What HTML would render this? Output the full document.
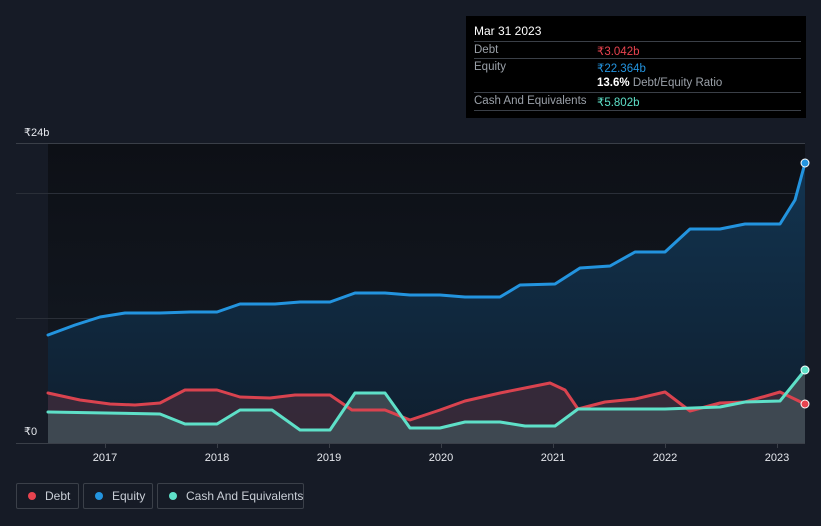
<!DOCTYPE html>
<html><head><meta charset="utf-8"><style>
body{margin:0;width:821px;height:526px;background:#161b26;font-family:"Liberation Sans",sans-serif;overflow:hidden;position:relative}
.tt{position:absolute;left:466px;top:16px;width:340px;height:102px;background:#000;color:#fff;font-size:11.5px}
.tt .r{position:absolute;left:8px;width:327px;border-top:1px solid #3a3f47}
.lbl{color:#9aa0a8;position:absolute;left:8px}
.val{position:absolute;left:131px;white-space:nowrap}
.leg{position:absolute;top:483px;height:26px;border:1px solid #3b4049;border-radius:2px;color:#c9ced6;font-size:12px;line-height:24px;box-sizing:border-box;white-space:nowrap}
.leg i{display:inline-block;width:8px;height:8px;border-radius:50%;margin:0 9px 0 11px;vertical-align:0px}
</style></head><body>
<svg width="821" height="526" style="position:absolute;left:0;top:0">
<defs>
<linearGradient id="bg" x1="0" y1="0" x2="0" y2="1"><stop offset="0" stop-color="#0d1016"/><stop offset="1" stop-color="#141a24"/></linearGradient>
<linearGradient id="eq" x1="0" y1="0" x2="0" y2="1"><stop offset="0" stop-color="#123450"/><stop offset="1" stop-color="#0f1e2e"/></linearGradient>
</defs>
<rect x="48" y="143" width="757" height="300" fill="url(#bg)"/>
<line x1="16" y1="143.5" x2="805" y2="143.5" stroke="#3a3f48"/>
<line x1="16" y1="193.5" x2="805" y2="193.5" stroke="#2a2f38"/>
<line x1="16" y1="318.5" x2="805" y2="318.5" stroke="#2a2f38"/>
<polygon fill="url(#eq)" points="48,335 75,325 100,317 125,313 160,313 190,312 217,312 240,304 275,304 300,302 330,302 355,293 385,293 410,295 440,295 465,297 500,297 520,285 555,284 580,268 610,266 635,252 665,252 690,229 720,229 745,224 780,224 795,200 805,163 805,443 48,443"/>
<polygon fill="#3a2a3a" opacity="0.9" points="48,393 80,400 110,404 135,405 160,403 185,390 217,390 240,397 270,398 295,395 330,395 352,410 385,410 410,420 440,410 465,401 500,393 530,387 550,383 565,390 578,409 605,402 635,399 665,392 690,411 720,403 745,402 780,392 805,404 805,443 48,443"/>
<polygon fill="#3f4a52" opacity="0.95" points="48,412 160,414 185,424 217,424 240,410 272,410 300,430 330,430 355,393 385,393 410,428 440,428 465,422 500,422 525,426 555,426 578,409 665,409 720,407 745,402 780,401 805,370 805,443 48,443"/>
<g fill="none" stroke-width="3" stroke-linejoin="round" stroke-linecap="round">
<polyline stroke="#d9434f" points="48,393 80,400 110,404 135,405 160,403 185,390 217,390 240,397 270,398 295,395 330,395 352,410 385,410 410,420 440,410 465,401 500,393 530,387 550,383 565,390 578,409 605,402 635,399 665,392 690,411 720,403 745,402 780,392 805,404"/>
<polyline stroke="#5ee0c8" points="48,412 160,414 185,424 217,424 240,410 272,410 300,430 330,430 355,393 385,393 410,428 440,428 465,422 500,422 525,426 555,426 578,409 665,409 720,407 745,402 780,401 805,370"/>
<polyline stroke="#2394df" points="48,335 75,325 100,317 125,313 160,313 190,312 217,312 240,304 275,304 300,302 330,302 355,293 385,293 410,295 440,295 465,297 500,297 520,285 555,284 580,268 610,266 635,252 665,252 690,229 720,229 745,224 780,224 795,200 805,163"/>
</g>
<circle cx="805" cy="163" r="4" fill="#2394df" stroke="#fff" stroke-width="1"/>
<circle cx="805" cy="370" r="4" fill="#5ee0c8" stroke="#fff" stroke-width="1"/>
<circle cx="805" cy="404" r="4" fill="#e8434f" stroke="#fff" stroke-width="1"/>
<line x1="16" y1="443.5" x2="805" y2="443.5" stroke="#3a3f48"/>
<g stroke="#3a3f48"><line x1="105.5" y1="443" x2="105.5" y2="448"/><line x1="217.5" y1="443" x2="217.5" y2="448"/><line x1="329.5" y1="443" x2="329.5" y2="448"/><line x1="441.5" y1="443" x2="441.5" y2="448"/><line x1="553.5" y1="443" x2="553.5" y2="448"/><line x1="665.5" y1="443" x2="665.5" y2="448"/><line x1="777.5" y1="443" x2="777.5" y2="448"/></g>
<g fill="#e6e9ee" font-size="11" font-family="Liberation Sans, sans-serif" text-anchor="middle">
<text x="105" y="461">2017</text><text x="217" y="461">2018</text><text x="329" y="461">2019</text><text x="441" y="461">2020</text><text x="553" y="461">2021</text><text x="665" y="461">2022</text><text x="777" y="461">2023</text>
</g>
<g fill="#e6e9ee" font-size="11" font-family="Liberation Sans, DejaVu Sans, sans-serif">
<text x="24" y="136">₹24b</text><text x="24" y="435">₹0</text>
</g>
</svg>
<div class="tt">
<div style="position:absolute;left:8px;top:8px;font-size:12px">Mar 31 2023</div>
<div class="r" style="top:25px"></div>
<div class="lbl" style="top:28px">Debt</div><div class="val" style="top:28px;color:#e8434f">₹3.042b</div>
<div class="r" style="top:42px"></div>
<div class="lbl" style="top:45px">Equity</div><div class="val" style="top:45px;color:#2394df">₹22.364b</div>
<div class="val" style="top:61px"><b>13.6%</b> <span style="color:#9aa0a8">Debt/Equity Ratio</span></div>
<div class="r" style="top:76px"></div>
<div class="lbl" style="top:79px">Cash And Equivalents</div><div class="val" style="top:79px;color:#5ee0c8">₹5.802b</div>
<div class="r" style="top:94px"></div>
</div>
<div class="leg" style="left:16px;width:63px"><i style="background:#e8434f"></i>Debt</div>
<div class="leg" style="left:83px;width:70px"><i style="background:#2394df"></i>Equity</div>
<div class="leg" style="left:157px;width:147px"><i style="background:#5ee0c8"></i>Cash And Equivalents</div>
</body></html>
